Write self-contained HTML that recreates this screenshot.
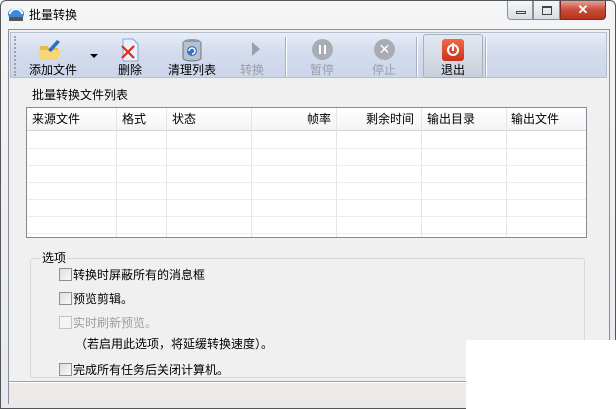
<!DOCTYPE html>
<html><head><meta charset="utf-8"><style>
*{margin:0;padding:0;box-sizing:border-box}
body{width:616px;height:409px;overflow:hidden;background:#fff;font-family:"Liberation Sans","Noto Sans CJK SC","WenQuanYi Zen Hei",sans-serif;font-size:12px;color:#000;position:relative}
.win{position:absolute;left:0;top:0;width:616px;height:409px;border:1px solid #555;border-radius:6px 6px 0 0;background:linear-gradient(#f4f5f7,#e6e9ee)}
.abs{position:absolute}
.client{position:absolute;left:7px;top:28px;width:602px;height:375px;border:1px solid #8a8f96;background:#f0f0f0}
.tb{position:absolute;left:1px;top:2px;width:597px;height:46px;border:1px solid #b7bfcc;background:linear-gradient(#e8edf8,#d4dcee 40%,#cdd5ea)}
.btn{position:absolute;top:28px;font-size:12px;text-align:center}
.dis{color:#9aa0a8}
.sep{position:absolute;top:4px;width:2px;height:40px;border-left:1px solid #a9b0bd;border-right:1px solid #fff}
.list{position:absolute;left:17px;top:77px;width:561px;height:131px;border:1px solid #838a94;background:#fff}
.hdr{position:absolute;left:0;top:0;width:559px;height:23px;border-bottom:1px solid #d5d5d5;background:linear-gradient(#fff,#f3f4f6)}
.hdr span{position:absolute;top:2px}
.cs{position:absolute;top:0;width:1px;height:129px;background:#e5e5e5}
.rl{position:absolute;left:0;width:559px;height:1px;background:#ececec}
.grp{position:absolute;left:21px;top:228px;width:555px;height:120px;border:1px solid #d5d9de;border-radius:3px}
.cb{position:absolute;width:13px;height:13px;border:1px solid #8e8f8f;background:linear-gradient(135deg,#dcdcdc,#fafafa)}
.opt{position:absolute;font-size:12px}
</style></head><body>
<div class="win">
 <svg class="abs" style="left:6px;top:5px" width="18" height="16"><ellipse cx="9" cy="8" rx="8" ry="6" fill="#3c8ad8"/><path d="M3 8 a6 5 0 0 1 12 0" fill="none" stroke="#fff" stroke-width="2"/><rect x="2" y="11" width="14" height="4" fill="#555"/></svg>
 <div class="abs" style="left:28px;top:5px;font-size:12px">批量转换</div>
 <div class="abs" style="left:506px;top:0;width:26px;height:19px;border:1px solid #8a8f96;border-top:none;border-radius:0 0 0 4px;background:linear-gradient(#f5f6f8,#d9dde3)"><div class="abs" style="left:8px;top:10px;width:10px;height:3px;border:1px solid #444"></div></div>
 <div class="abs" style="left:532px;top:0;width:27px;height:19px;border:1px solid #8a8f96;border-top:none;background:linear-gradient(#f5f6f8,#d9dde3)"><div class="abs" style="left:8px;top:5px;width:10px;height:9px;border:1px solid #444;border-top-width:2px"></div></div>
 <div class="abs" style="left:559px;top:0;width:46px;height:19px;border:1px solid #7a2a22;border-top:none;border-radius:0 0 4px 0;background:linear-gradient(#e8a195,#c94a36 50%,#b8321f);color:#fff;font-weight:bold;text-align:center;font-size:13px;line-height:17px">✕</div>
 <div class="client">
  <div class="tb">
   <div class="abs" style="left:3px;top:3px;width:3px;height:40px;border-left:2px dotted #9aa3b3"></div>
   <svg class="abs" style="left:27px;top:5px" width="26" height="24"><path d="M2 8 h7 l2 2 h9 v12 h-18z" fill="#e9b84a"/><path d="M1 12 h22 l-3 10 h-18z" fill="#f7d676"/><path d="M10 12 l9 -10 l3 2 l-9 10z" fill="#2a6fc8"/></svg>
   <div class="abs" style="left:79px;top:21px;width:0;height:0;border-left:4px solid transparent;border-right:4px solid transparent;border-top:4px solid #000"></div>
   <div class="btn" style="left:18px">添加文件</div>
   <svg class="abs" style="left:108px;top:5px" width="22" height="24"><path d="M4 1 h10 l5 5 v17 h-15z" fill="#e8f0fb" stroke="#8aa4c8"/><path d="M3 8 l12 12 M15 8 l-12 12" stroke="#e02a1a" stroke-width="2.2"/></svg>
   <div class="btn" style="left:107px">删除</div>
   <svg class="abs" style="left:170px;top:4px" width="22" height="26"><ellipse cx="11" cy="5" rx="9" ry="3" fill="#8f9aa8"/><path d="M2 5 v16 a9 3 0 0 0 18 0 v-16" fill="#b8c1cc" stroke="#6d7784"/><circle cx="11" cy="14" r="5" fill="#2f73c9"/><path d="M8 14 a3 3 0 1 1 3 3" stroke="#fff" fill="none" stroke-width="1.5"/></svg>
   <div class="btn" style="left:157px">清理列表</div>
   <svg class="abs" style="left:239px;top:8px" width="12" height="16"><path d="M2 1 l8 7 l-8 7z" fill="#9aa0a8"/></svg>
   <div class="btn dis" style="left:229px">转换</div>
   <div class="sep" style="left:274px"></div>
   <div class="abs" style="left:301px;top:6px;width:21px;height:21px;border-radius:50%;background:#a9adb3"><div class="abs" style="left:7px;top:6px;width:2px;height:9px;background:#fff"></div><div class="abs" style="left:12px;top:6px;width:2px;height:9px;background:#fff"></div></div>
   <div class="btn dis" style="left:299px">暂停</div>
   <div class="abs" style="left:363px;top:6px;width:21px;height:21px;border-radius:50%;background:#a9adb3;color:#fff;text-align:center;line-height:21px;font-size:14px">✕</div>
   <div class="btn dis" style="left:361px">停止</div>
   <div class="sep" style="left:405px"></div>
   <div class="abs" style="left:412px;top:1px;width:60px;height:44px;border:1px solid #a8b0bd;border-radius:3px;background:linear-gradient(#e4e8f0,#c9cfdb)"></div>
   <div class="abs" style="left:431px;top:6px;width:22px;height:22px;border-radius:3px;background:linear-gradient(#f06a4a,#c8331a);"><div class="abs" style="left:5px;top:5px;width:12px;height:12px;border:2px solid #fff;border-radius:50%"></div><div class="abs" style="left:10px;top:4px;width:2px;height:8px;background:#fff"></div></div>
   <div class="btn" style="left:430px">退出</div>
   <div class="sep" style="left:474px"></div>
  </div>
  <div class="abs" style="left:23px;top:56px">批量转换文件列表</div>
  <div class="list">
   <div class="hdr"><span style="left:5px">来源文件</span><span style="left:95px">格式</span><span style="left:145px">状态</span><span style="left:280px">帧率</span><span style="left:339px">剩余时间</span><span style="left:400px">输出目录</span><span style="left:484px">输出文件</span></div>
   <div class="cs" style="left:89px"></div><div class="cs" style="left:139px"></div><div class="cs" style="left:224px"></div><div class="cs" style="left:309px"></div><div class="cs" style="left:394px"></div><div class="cs" style="left:479px"></div>
   <div class="rl" style="top:40px"></div><div class="rl" style="top:57px"></div><div class="rl" style="top:74px"></div><div class="rl" style="top:91px"></div><div class="rl" style="top:108px"></div><div class="rl" style="top:125px"></div>
  </div>
  <div class="grp"></div>
  <div class="abs" style="left:32px;top:219px;background:#f0f0f0;padding:0 1px">选项</div>
  <div class="cb" style="left:50px;top:238px"></div><div class="opt" style="left:64px;top:236px">转换时屏蔽所有的消息框</div>
  <div class="cb" style="left:50px;top:262px"></div><div class="opt" style="left:64px;top:260px">预览剪辑。</div>
  <div class="cb" style="left:50px;top:286px;border-color:#c4c4c4;background:#f4f4f4"></div><div class="opt dis" style="left:64px;top:284px">实时刷新预览。</div>
  <div class="opt" style="left:66px;top:305px">（若启用此选项，将延缓转换速度）。</div>
  <div class="cb" style="left:50px;top:333px"></div><div class="opt" style="left:64px;top:331px">完成所有任务后关闭计算机。</div>
  <div class="abs" style="left:0;top:351px;width:600px;height:1px;background:#a0a0a0"></div>
  <div class="abs" style="left:0;top:352px;width:600px;height:22px;background:#ece9e8;border-top:1px solid #fff"></div>
 </div>
</div>
<div class="abs" style="left:466px;top:340px;width:150px;height:69px;background:#fff"></div>
</body></html>
